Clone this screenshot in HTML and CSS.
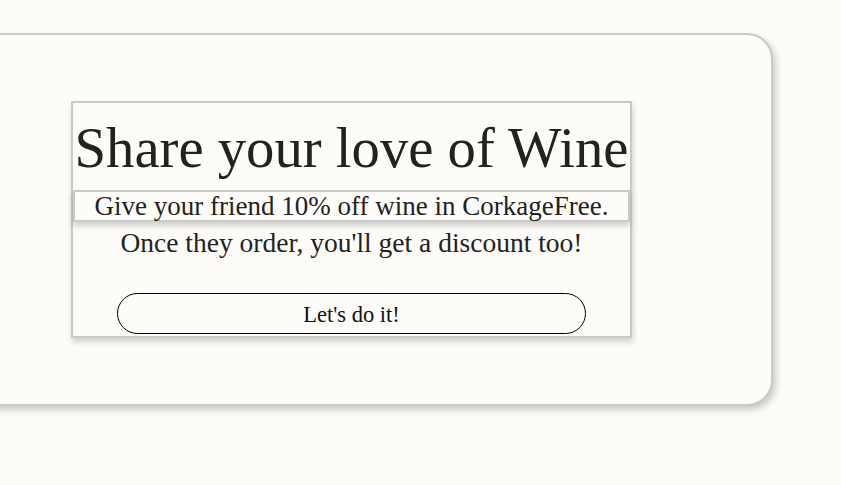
FILE: index.html
```html
<!DOCTYPE html>
<html>
<head>
<meta charset="utf-8">
<link rel="stylesheet" href="styles.css">
</head>
<body>
<div class="card">
  <div class="panel">
    <h1 class="title">Share your love of Wine</h1>
    <p class="offer">Give your friend 10% off wine in CorkageFree.</p>
    <p class="note">Once they order, you'll get a discount too!</p>
    <button class="cta">Let's do it!</button>
  </div>
</div>
</body>
</html>
```
FILE: styles.css
```css
html, body {
  margin: 0;
  padding: 0;
  background: #fdfcf8;
}
body {
  font-family: "Liberation Serif", serif;
  color: #222;
  padding-top: 33px;
  overflow: hidden;
  height: 485px;
  box-sizing: border-box;
}
.card {
  margin-left: -70px;
  width: 843px;
  height: 373px;
  box-sizing: border-box;
  border: 2px solid #c9c9c9;
  border-radius: 26px;
  background: #fdfcf8;
  box-shadow: 3px 4px 7px rgba(0,0,0,0.2);
  display: flex;
  align-items: center;
  justify-content: center;
}
.panel {
  width: 561px;
  height: 237px;
  box-sizing: border-box;
  border: 2px solid #c9c9c9;
  box-shadow: 1px 4px 6px rgba(0,0,0,0.18);
  display: flex;
  flex-direction: column;
  align-items: center;
}
.title {
  margin: 0;
  padding-top: 2px;
  font-weight: normal;
  font-size: 56.7px;
  line-height: 85px;
  white-space: nowrap;
}
.offer {
  margin: 0;
  align-self: stretch;
  border: 2px solid #c9c9c9;
  box-shadow: 0 4px 6px rgba(0,0,0,0.18);
  text-align: center;
  font-size: 27px;
  line-height: 28px;
  white-space: nowrap;
}
.note {
  margin: 0;
  font-size: 27.5px;
  line-height: 42px;
  white-space: nowrap;
}
.cta {
  margin-top: 29px;
  flex: none;
  width: 469px;
  height: 41px;
  border: 1px solid #000;
  border-radius: 21px;
  background: transparent;
  font-family: "Liberation Serif", serif;
  font-size: 22.5px;
  color: #111;
  padding: 2px 0 0;
}
```
